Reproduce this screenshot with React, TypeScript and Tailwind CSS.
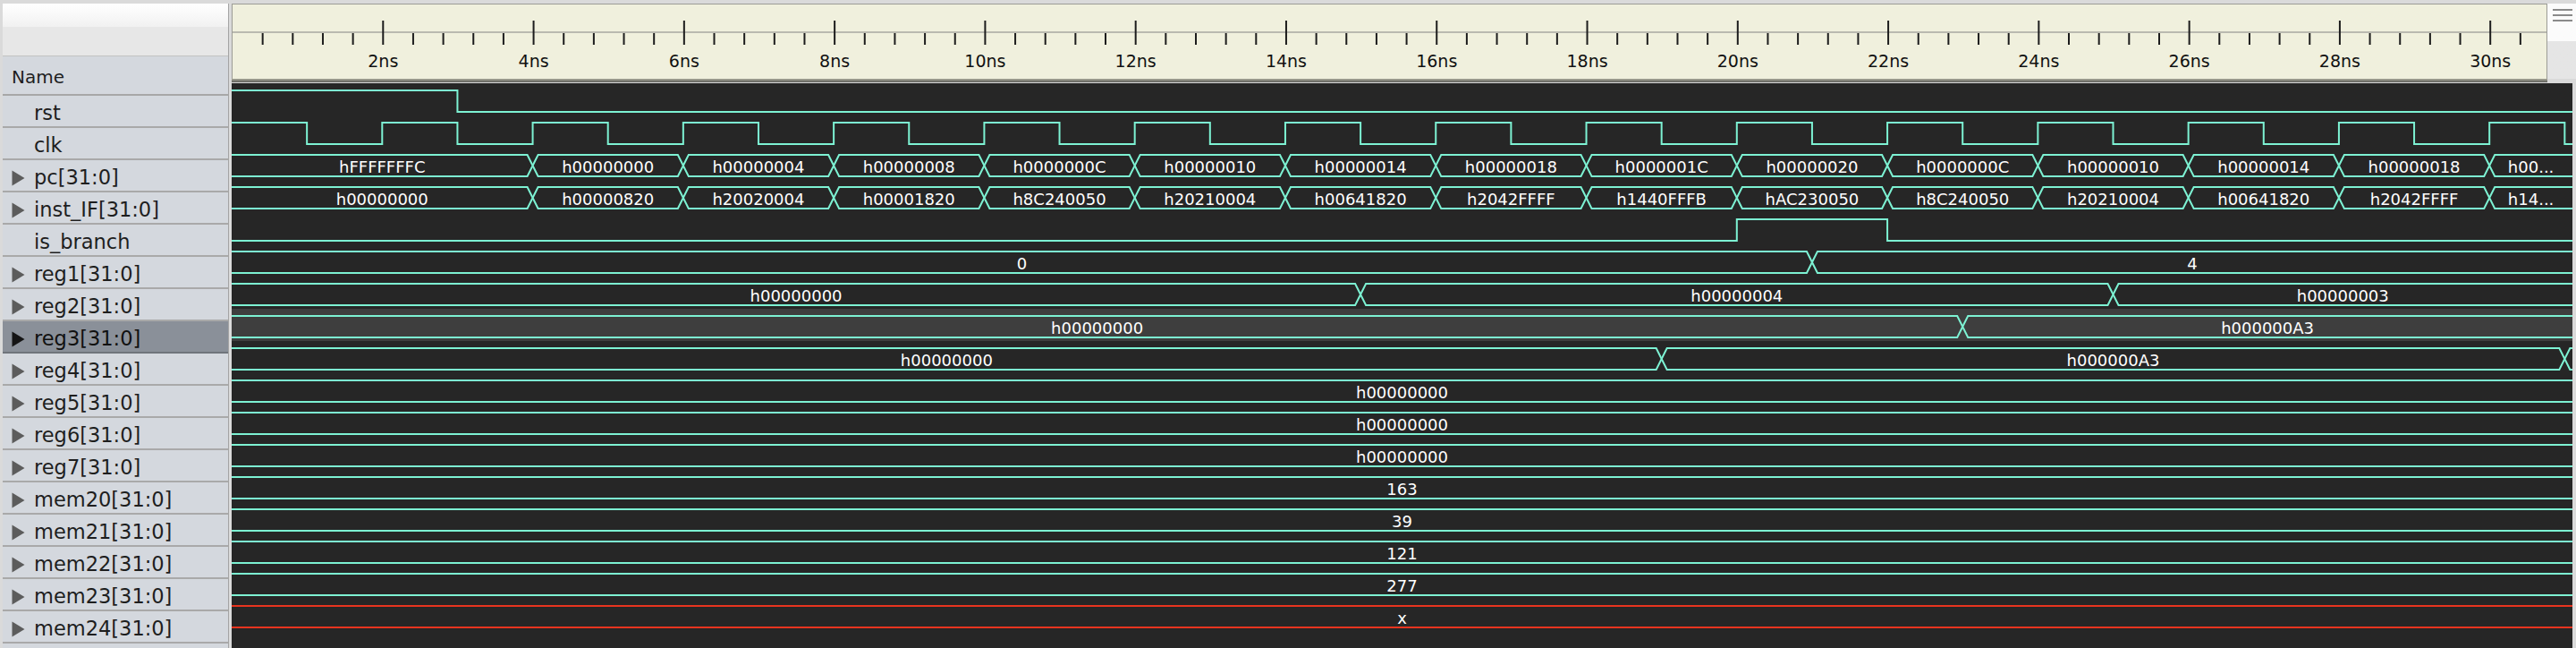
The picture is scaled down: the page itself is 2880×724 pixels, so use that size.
import React from "react";

const PX = 84.14; // pixels per ns
const WAVE_W = 2617;
const TIMELINE_W = 2589;
const WAVE = "#7df2d3";
const RED = "#e8341f";
const FONT = "'DejaVu Sans', Verdana, sans-serif";

type Seg = [number, string];

interface Signal {
  name: string;
  bus?: boolean;
  segs?: Seg[];
  bits?: [number, number][];
  red?: boolean;
  selected?: boolean;
}

const clkBits: [number, number][] = [];
for (let k = 0; k < 16; k++) {
  clkBits.push([2 * k, 1], [2 * k + 1, 0]);
}

const pcVals = [
  "hFFFFFFFC", "h00000000", "h00000004", "h00000008", "h0000000C",
  "h00000010", "h00000014", "h00000018", "h0000001C", "h00000020",
  "h0000000C", "h00000010", "h00000014", "h00000018", "h00...",
];
const instVals = [
  "h00000000", "h00000820", "h20020004", "h00001820", "h8C240050",
  "h20210004", "h00641820", "h2042FFFF", "h1440FFFB", "hAC230050",
  "h8C240050", "h20210004", "h00641820", "h2042FFFF", "h14...",
];
const stepTimes = [0, 4, 6, 8, 10, 12, 14, 16, 18, 20, 22, 24, 26, 28, 30];

const signals: Signal[] = [
  { name: "rst", bits: [[0, 1], [3, 0]] },
  { name: "clk", bits: clkBits },
  { name: "pc[31:0]", bus: true, segs: stepTimes.map((t, i) => [t, pcVals[i]] as Seg) },
  { name: "inst_IF[31:0]", bus: true, segs: stepTimes.map((t, i) => [t, instVals[i]] as Seg) },
  { name: "is_branch", bits: [[0, 0], [20, 1], [22, 0]] },
  { name: "reg1[31:0]", bus: true, segs: [[0, "0"], [21, "4"]] },
  { name: "reg2[31:0]", bus: true, segs: [[0, "h00000000"], [15, "h00000004"], [25, "h00000003"]] },
  { name: "reg3[31:0]", bus: true, selected: true, segs: [[0, "h00000000"], [23, "h000000A3"]] },
  { name: "reg4[31:0]", bus: true, segs: [[0, "h00000000"], [19, "h000000A3"], [31, ""]] },
  { name: "reg5[31:0]", bus: true, segs: [[0, "h00000000"]] },
  { name: "reg6[31:0]", bus: true, segs: [[0, "h00000000"]] },
  { name: "reg7[31:0]", bus: true, segs: [[0, "h00000000"]] },
  { name: "mem20[31:0]", bus: true, segs: [[0, "163"]] },
  { name: "mem21[31:0]", bus: true, segs: [[0, "39"]] },
  { name: "mem22[31:0]", bus: true, segs: [[0, "121"]] },
  { name: "mem23[31:0]", bus: true, segs: [[0, "277"]] },
  { name: "mem24[31:0]", bus: true, red: true, segs: [[0, "x"]] },
];

const TOP = 8;
const BOT = 32;
const MID = 20;

function BitWave({ bits }: { bits: [number, number][] }) {
  let d = "";
  bits.forEach(([t, v], i) => {
    const x = Math.min(t * PX, WAVE_W);
    const y = v ? TOP : BOT;
    if (i === 0) d += `M0 ${y}`;
    else d += ` L${x} ${bits[i - 1][1] ? TOP : BOT} L${x} ${y}`;
  });
  d += ` L${WAVE_W} ${bits[bits.length - 1][1] ? TOP : BOT}`;
  return <path d={d} fill="none" stroke={WAVE} strokeWidth={2} />;
}

function BusWave({ segs, red }: { segs: Seg[]; red?: boolean }) {
  const color = red ? RED : WAVE;
  return (
    <>
      {segs.map(([t0, label], i) => {
        const xa = t0 * PX;
        const next = segs[i + 1];
        const xb = next ? Math.min(next[0] * PX, WAVE_W) : WAVE_W;
        const tl = i > 0 ? 6 : 0;
        const tr = next && next[0] * PX < WAVE_W ? 6 : 0;
        const d =
          `M${xa} ${tl ? MID : TOP} L${xa + tl} ${TOP} L${xb - tr} ${TOP} L${xb} ${tr ? MID : TOP}` +
          ` M${xa} ${tl ? MID : BOT} L${xa + tl} ${BOT} L${xb - tr} ${BOT} L${xb} ${tr ? MID : BOT}`;
        return (
          <g key={i}>
            <path d={d} fill="none" stroke={color} strokeWidth={2} />
            {label && (
              <text
                x={(xa + xb) / 2}
                y={MID + 1}
                fill="#ffffff"
                fontSize={18}
                fontFamily={FONT}
                textAnchor="middle"
                dominantBaseline="central"
              >
                {label}
              </text>
            )}
          </g>
        );
      })}
    </>
  );
}

function Timeline() {
  const ticks = [];
  for (let k = 1; k <= 77; k++) {
    const x = k * 0.4 * PX;
    if (x > TIMELINE_W - 4) break;
    const major = k % 5 === 0;
    ticks.push(
      <line key={k} x1={x} x2={x} y1={major ? 18 : 32} y2={45} stroke="#1c1c1c" strokeWidth={2} />
    );
    if (major) {
      ticks.push(
        <text
          key={`l${k}`}
          x={x}
          y={63}
          fontSize={19}
          fontFamily={FONT}
          fill="#111"
          textAnchor="middle"
          dominantBaseline="central"
        >
          {Math.round(k * 0.4)}ns
        </text>
      );
    }
  }
  return (
    <svg width={TIMELINE_W - 2} height={83} className="block">
      <line x1={0} x2={TIMELINE_W} y1={31} y2={31} stroke="#a8a8a0" strokeWidth={1.5} />
      {ticks}
    </svg>
  );
}

function Triangle({ dark }: { dark?: boolean }) {
  return (
    <svg width={15} height={18} viewBox="0 0 15 18" className="shrink-0">
      <polygon points="0.5,0.5 14.5,9 0.5,17.5" fill={dark ? "#151515" : "#5c5c5c"} />
    </svg>
  );
}

export default function App() {
  return (
    <div
      className="flex h-[724px] w-[2880px] overflow-hidden bg-[#dadada] pt-[4px]"
      style={{ fontFamily: FONT }}
    >
      <aside className="ml-[3px] flex w-[253px] shrink-0 flex-col border-r border-[#a4a4a4]">
        <div className="h-[26px] bg-gradient-to-b from-white to-[#f1f1f1]" />
        <div className="h-[32px] bg-[#e7e7e7]" />
        <div className="flex h-[45px] items-center border-t border-b-2 border-t-[#c2c2c2] border-b-[#a7a7a7] bg-[#d4d8de] pt-[4px] pl-[10px] text-[20px] text-[#1e1e1e]">
          Name
        </div>
        {signals.map((s) => (
          <div
            key={s.name}
            className={
              s.selected
                ? "flex h-[36px] shrink-0 items-center gap-[10px] border-b-2 border-[#6f747b] bg-[#8a9099] pt-[5px] pl-[10px] text-[22.5px] text-[#111]"
                : "flex h-[36px] shrink-0 items-center gap-[10px] border-b-2 border-[#a9a9a9] bg-[#d4d8de] pt-[5px] pl-[10px] text-[22.5px] text-[#1e1e1e]"
            }
          >
            {s.bus ? <Triangle dark={s.selected} /> : <span className="w-[15px] shrink-0" />}
            <span className="leading-none">{s.name}</span>
          </div>
        ))}
        <div className="flex-1 bg-[#d4d8de]" />
      </aside>

      <div className="w-[3px] shrink-0" />

      <main className="flex min-w-0 flex-1 flex-col">
        <div className="flex h-[84px] shrink-0">
          <div className="flex-1 border-t border-l border-r border-[#9c9c96] bg-[#f0f0dd]">
            <Timeline />
          </div>
          <div className="flex w-[32px] flex-col bg-gradient-to-b from-[#fbfbfb] from-50% to-[#e5e5e5] to-50% pt-[6px] pl-[6px]">
            <div className="mb-[4px] h-[2px] w-[22px] bg-[#8a8a8a]" />
            <div className="mb-[4px] h-[2px] w-[22px] bg-[#8a8a8a]" />
            <div className="h-[2px] w-[22px] bg-[#8a8a8a]" />
          </div>
        </div>
        <div className="mr-[32px] h-[4px] shrink-0 bg-gradient-to-b from-[#a9a99a] to-[#5e5e5a]" />
        <div className="h-[1px] shrink-0" />
        <div className="mr-[4px] flex flex-1 flex-col bg-[#262626]">
          {signals.map((s) => (
            <div key={s.name} className={s.selected ? "h-[36px] shrink-0 bg-[#3e3e3e]" : "h-[36px] shrink-0"}>
              <svg width={WAVE_W} height={36} className="block overflow-hidden">
                {s.bits ? <BitWave bits={s.bits} /> : <BusWave segs={s.segs!} red={s.red} />}
              </svg>
            </div>
          ))}
        </div>
      </main>
    </div>
  );
}
